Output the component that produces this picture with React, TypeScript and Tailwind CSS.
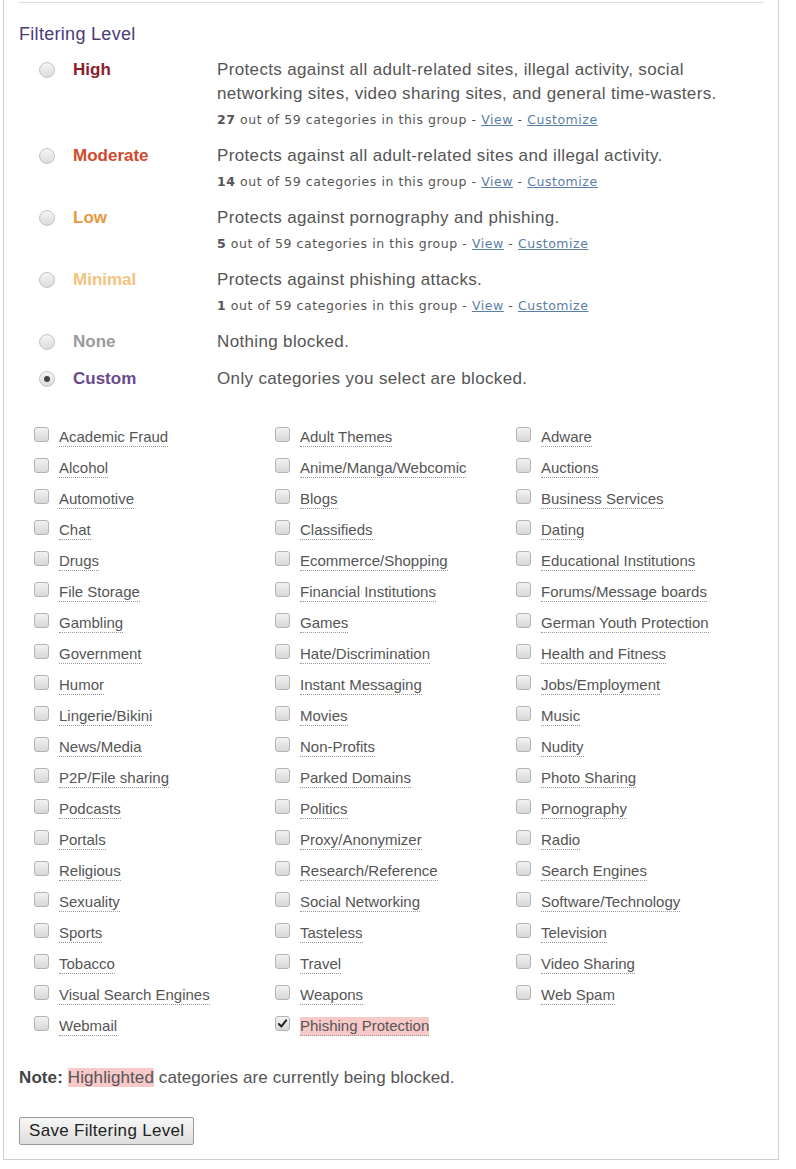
const levels = [
  {
    name: 'High',
    color: 'text-[#8c1d2c]',
    desc: ['Protects against all adult-related sites, illegal activity, social', 'networking sites, video sharing sites, and general time-wasters.'],
    count: 27,
  },
  { name: 'Moderate', color: 'text-[#d04a2c]', desc: ['Protects against all adult-related sites and illegal activity.'], count: 14 },
  { name: 'Low', color: 'text-[#e9993f]', desc: ['Protects against pornography and phishing.'], count: 5 },
  { name: 'Minimal', color: 'text-[#f3c47e]', desc: ['Protects against phishing attacks.'], count: 1 },
  { name: 'None', color: 'text-[#9a9a9a]', desc: ['Nothing blocked.'], count: null },
  { name: 'Custom', color: 'text-[#6b4a8c]', desc: ['Only categories you select are blocked.'], count: null, selected: true },
];

const categories = [
  'Academic Fraud', 'Adult Themes', 'Adware',
  'Alcohol', 'Anime/Manga/Webcomic', 'Auctions',
  'Automotive', 'Blogs', 'Business Services',
  'Chat', 'Classifieds', 'Dating',
  'Drugs', 'Ecommerce/Shopping', 'Educational Institutions',
  'File Storage', 'Financial Institutions', 'Forums/Message boards',
  'Gambling', 'Games', 'German Youth Protection',
  'Government', 'Hate/Discrimination', 'Health and Fitness',
  'Humor', 'Instant Messaging', 'Jobs/Employment',
  'Lingerie/Bikini', 'Movies', 'Music',
  'News/Media', 'Non-Profits', 'Nudity',
  'P2P/File sharing', 'Parked Domains', 'Photo Sharing',
  'Podcasts', 'Politics', 'Pornography',
  'Portals', 'Proxy/Anonymizer', 'Radio',
  'Religious', 'Research/Reference', 'Search Engines',
  'Sexuality', 'Social Networking', 'Software/Technology',
  'Sports', 'Tasteless', 'Television',
  'Tobacco', 'Travel', 'Video Sharing',
  'Visual Search Engines', 'Weapons', 'Web Spam',
  'Webmail', 'Phishing Protection',
];

function Radio({ selected }: { selected?: boolean }) {
  return (
    <span className="flex h-[16px] w-[16px] items-center justify-center rounded-full border border-[#c4c4c4] bg-gradient-to-b from-[#f4f4f4] to-[#dcdcdc]">
      {selected && <span className="h-[6px] w-[6px] rounded-full bg-[#444]" />}
    </span>
  );
}

function Checkbox({ checked }: { checked?: boolean }) {
  return (
    <span className="flex h-[15px] w-[15px] items-center justify-center rounded-[3px] border border-[#b4b4b4] bg-gradient-to-b from-[#f2f2f2] to-[#d8d8d8]">
      {checked && (
        <svg viewBox="0 0 12 12" className="h-[11px] w-[11px]">
          <path d="M2 6.5 L4.8 9.2 L10 2.6" fill="none" stroke="#222" strokeWidth="2.2" strokeLinecap="round" strokeLinejoin="round" />
        </svg>
      )}
    </span>
  );
}

export default function App() {
  return (
    <div className="min-h-[1169px] w-[796px] bg-white font-['Liberation_Sans',Arial,sans-serif] text-[#555]">
      <div className="ml-[3px] w-[776px] border-x border-b border-[#cfcfcf] px-[15px] pb-[14px] pt-[2px]">
        <div className="h-px bg-[#dcdcdc]" />

        <h2 className="mt-[20px] text-[18px] leading-[22px] tracking-[0.3px] text-[#4d3b78]">Filtering Level</h2>

        <div className="mt-[13px]">
          {levels.map((lvl) => (
            <div key={lvl.name} className={`flex ${lvl.name === 'None' ? 'mb-[13px]' : 'mb-[11px]'}`}>
              <div className="flex h-[24px] w-[54px] items-center pl-[20px]">
                <Radio selected={lvl.selected} />
              </div>
              <div className={`w-[144px] text-[17px] font-bold leading-[24px] ${lvl.color}`}>{lvl.name}</div>
              <div>
                {lvl.desc.map((line) => (
                  <div key={line} className="text-[17px] leading-[24px] tracking-[0.35px] text-[#555]">{line}</div>
                ))}
                {lvl.count !== null && (
                  <div className="font-['DejaVu_Sans',Verdana,sans-serif] text-[12.5px] leading-[27px] tracking-[0.55px] text-[#555]">
                    <span className="font-bold">{lvl.count}</span> out of 59 categories in this group -{' '}
                    <a className="text-[#5b7ea6] underline">View</a> -{' '}
                    <a className="text-[#5b7ea6] underline">Customize</a>
                  </div>
                )}
              </div>
            </div>
          ))}
        </div>

        <div className="ml-[15px] mt-[31px] grid grid-cols-[241px_241px_241px]">
          {categories.map((cat) => {
            const on = cat === 'Phishing Protection';
            return (
              <div key={cat} className="flex h-[31px] items-center">
                <span className="-mt-[7px]">
                  <Checkbox checked={on} />
                </span>
                <span
                  className={`ml-[10px] border-b border-dotted border-[#999] text-[15px] leading-[18px] text-[#555] ${on ? 'bg-[#f8c9c9]' : ''}`}
                >
                  {cat}
                </span>
              </div>
            );
          })}
        </div>

        <p className="mt-[25px] text-[17px] leading-[22px] tracking-[0.1px] text-[#555]">
          <span className="font-bold text-[#444]">Note:</span>{' '}
          <span className="bg-[#f8c9c9]">Highlighted</span> categories are currently being blocked.
        </p>

        <button
          type="button"
          className="mt-[28px] h-[28px] rounded-[2px] border border-[#9a9a9a] bg-gradient-to-b from-[#f7f7f7] to-[#dddddd] px-[9px] text-[17px] leading-[24px] tracking-[0.3px] text-[#222]"
        >
          Save Filtering Level
        </button>
      </div>
    </div>
  );
}
